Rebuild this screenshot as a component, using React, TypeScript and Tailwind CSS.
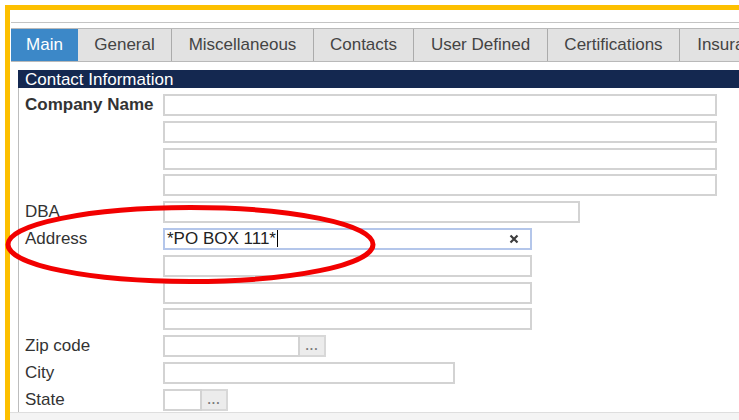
import React from "react";

type Tab = { label: string; width: string; active?: boolean };

const tabs: Tab[] = [
  { label: "Main", width: "w-[67px]", active: true },
  { label: "General", width: "w-[94px]" },
  { label: "Miscellaneous", width: "w-[142px]" },
  { label: "Contacts", width: "w-[100px]" },
  { label: "User Defined", width: "w-[134px]" },
  { label: "Certifications", width: "w-[132px]" },
  { label: "Insurance", width: "w-[110px]" },
];

function TextBox({
  width,
  value,
  focused,
}: {
  width: string;
  value?: string;
  focused?: boolean;
}) {
  return (
    <div
      className={`flex h-[22px] items-center border-2 bg-white px-[2px] ${width} ${
        focused ? "border-[#b4c6ea]" : "border-[#d3d3d3]"
      }`}
    >
      {value && (
        <>
          <span className="text-[17px] leading-none text-[#222]">{value}</span>
          <span className="ml-[1px] h-[17px] w-px bg-black" />
          <span className="ml-auto mr-[9px] flex items-center">
            <svg width="10" height="10" viewBox="0 0 10 10">
              <path d="M1.5 1.5 L8.5 8.5 M8.5 1.5 L1.5 8.5" stroke="#3d3d3d" strokeWidth="2.2" />
            </svg>
          </span>
        </>
      )}
    </div>
  );
}

function LookupButton() {
  return (
    <div className="flex h-[22px] w-[26px] items-end justify-center border-2 border-l-0 border-[#d8d8d8] bg-[#ececec] pb-[3px]">
      <span className="text-[12px] font-bold leading-none tracking-[1px] text-[#7a7a7a]">...</span>
    </div>
  );
}

function Row({
  label,
  bold,
  children,
}: {
  label?: string;
  bold?: boolean;
  children: React.ReactNode;
}) {
  return (
    <div className="flex h-[22px] items-center">
      <div
        className={`w-[138px] text-[17px] leading-[22px] text-[#333] ${
          bold ? "font-bold" : ""
        }`}
      >
        {label}
      </div>
      <div className="flex">{children}</div>
    </div>
  );
}

export default function App() {
  return (
    <div className="relative h-[420px] w-[739px] overflow-hidden bg-white pl-[5px] pt-[5px] font-['Liberation_Sans',Arial,sans-serif]">
      <div className="flex h-[420px] w-[800px] flex-col border-l-[5px] border-t-[5px] border-[#fdc000] bg-white">
        <div className="ml-[1px] mt-[12px] h-px bg-[#c4c4c4]" />

        {/* tab strip */}
        <div className="ml-[1px] mt-[5px] flex h-[34px] border-y border-[#b9b9b9] bg-[#e2e2e2]">
          {tabs.map((t) => (
            <div
              key={t.label}
              className={`flex shrink-0 items-center justify-center text-[17px] ${t.width} ${
                t.active
                  ? "bg-[#3c88c8] text-white"
                  : "border-r border-[#ababab] text-[#444]"
              }`}
            >
              {t.label}
            </div>
          ))}
        </div>

        <div className="ml-[8px] mt-[8px] flex h-[18px] items-center bg-[#142850] pl-[7px] text-[17px] leading-none text-white">
          Contact Information
        </div>

        {/* contact form */}
        <div className="ml-[8px] flex h-[324px] flex-col gap-[4.8px] border-l border-[#bdbdbd] pl-[6px] pt-[6px]">
          <Row label="Company Name" bold>
            <TextBox width="w-[554px]" />
          </Row>
          <Row>
            <TextBox width="w-[554px]" />
          </Row>
          <Row>
            <TextBox width="w-[554px]" />
          </Row>
          <Row>
            <TextBox width="w-[554px]" />
          </Row>
          <Row label="DBA">
            <TextBox width="w-[417px]" />
          </Row>
          <Row label="Address">
            <TextBox width="w-[369px]" value="*PO BOX 111*" focused />
          </Row>
          <Row>
            <TextBox width="w-[369px]" />
          </Row>
          <Row>
            <TextBox width="w-[369px]" />
          </Row>
          <Row>
            <TextBox width="w-[369px]" />
          </Row>
          <Row label="Zip code">
            <TextBox width="w-[137px]" />
            <LookupButton />
          </Row>
          <Row label="City">
            <TextBox width="w-[292px]" />
          </Row>
          <Row label="State">
            <TextBox width="w-[39px]" />
            <LookupButton />
          </Row>
        </div>

        <div className="h-[10px] border-t border-[#dedede] bg-[#f4f4f4]" />
      </div>

      {/* red marker ring around the address field */}
      <svg
        className="pointer-events-none absolute left-0 top-0"
        width="739"
        height="420"
        viewBox="0 0 739 420"
      >
        <ellipse
          cx="190.5"
          cy="244.5"
          rx="182.5"
          ry="37"
          fill="none"
          stroke="#f20000"
          strokeWidth="5"
        />
      </svg>
    </div>
  );
}
